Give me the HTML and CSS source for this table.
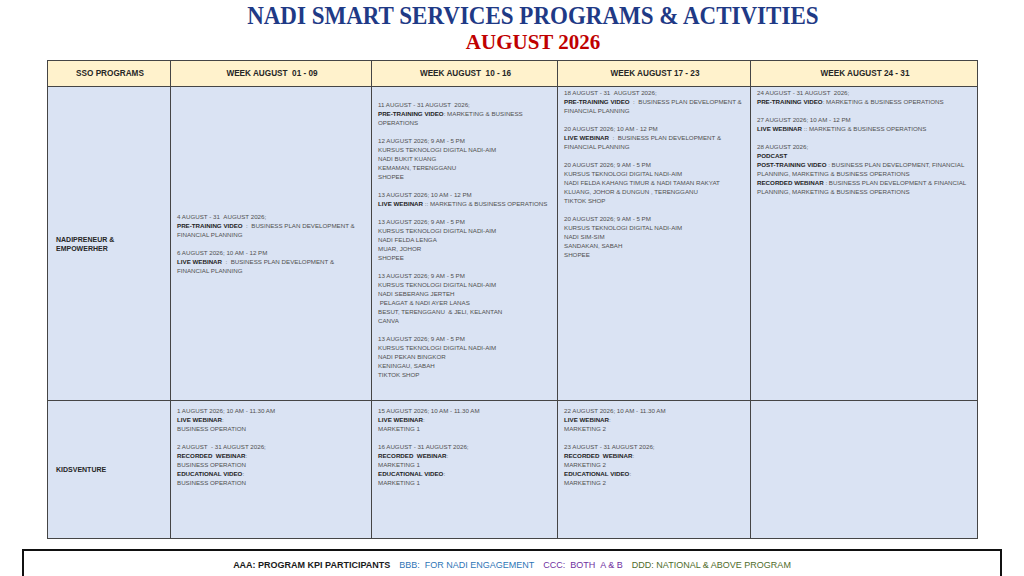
FILE: index.html
```html
<!DOCTYPE html>
<html lang="en">
<head>
<meta charset="utf-8">
<title>NADI Smart Services Programs &amp; Activities</title>
<link rel="stylesheet" href="styles.css">
</head>
<body>
<header class="head">
  <h1 class="title"><span>NADI SMART SERVICES PROGRAMS &amp; ACTIVITIES</span></h1>
  <h2 class="subtitle"><span>AUGUST 2026</span></h2>
</header>

<table class="sched">
  <colgroup>
    <col class="c1"><col class="c2"><col class="c3"><col class="c4"><col class="c5">
  </colgroup>
  <thead>
    <tr class="hrow">
      <th>SSO PROGRAMS</th>
      <th>WEEK AUGUST &nbsp;01 - 09</th>
      <th>WEEK AUGUST &nbsp;10 - 16</th>
      <th>WEEK AUGUST 17 - 23</th>
      <th>WEEK AUGUST 24 - 31</th>
    </tr>
  </thead>
  <tbody>
    <tr class="r1">
      <th class="prog">NADIPRENEUR &amp;<br>EMPOWERHER</th>
      <td class="mid">
        <p>4 AUGUST - 31 &nbsp;AUGUST 2026;<br><b>PRE-TRAINING VIDEO</b> &nbsp;: &nbsp;BUSINESS PLAN DEVELOPMENT &amp;<br>FINANCIAL PLANNING</p>
        <p>6 AUGUST 2026; 10 AM - 12 PM<br><b>LIVE WEBINAR</b> &nbsp;: &nbsp;BUSINESS PLAN DEVELOPMENT &amp;<br>FINANCIAL PLANNING</p>
      </td>
      <td class="tall">
        <p>11 AUGUST - 31 AUGUST &nbsp;2026;<br><b>PRE-TRAINING VIDEO</b>: MARKETING &amp; BUSINESS<br>OPERATIONS</p>
        <p>12 AUGUST 2026; 9 AM - 5 PM<br>KURSUS TEKNOLOGI DIGITAL NADI-AIM<br>NADI BUKIT KUANG<br>KEMAMAN, TERENGGANU<br>SHOPEE</p>
        <p>13 AUGUST 2026; 10 AM - 12 PM<br><b>LIVE WEBINAR</b> :: MARKETING &amp; BUSINESS OPERATIONS</p>
        <p>13 AUGUST 2026; 9 AM - 5 PM<br>KURSUS TEKNOLOGI DIGITAL NADI-AIM<br>NADI FELDA LENGA<br>MUAR, JOHOR<br>SHOPEE</p>
        <p>13 AUGUST 2026; 9 AM - 5 PM<br>KURSUS TEKNOLOGI DIGITAL NADI-AIM<br>NADI SEBERANG JERTEH<br>&nbsp;PELAGAT &amp; NADI AYER LANAS<br>BESUT, TERENGGANU &nbsp;&amp; JELI, KELANTAN<br>CANVA</p>
        <p>13 AUGUST 2026; 9 AM - 5 PM<br>KURSUS TEKNOLOGI DIGITAL NADI-AIM<br>NADI PEKAN BINGKOR<br>KENINGAU, SABAH<br>TIKTOK SHOP</p>
      </td>
      <td class="top">
        <p>18 AUGUST - 31 &nbsp;AUGUST 2026;<br><b>PRE-TRAINING VIDEO</b> &nbsp;: &nbsp;BUSINESS PLAN DEVELOPMENT &amp;<br>FINANCIAL PLANNING</p>
        <p>20 AUGUST 2026; 10 AM - 12 PM<br><b>LIVE WEBINAR</b> &nbsp;: &nbsp;BUSINESS PLAN DEVELOPMENT &amp;<br>FINANCIAL PLANNING</p>
        <p>20 AUGUST 2026; 9 AM - 5 PM<br>KURSUS TEKNOLOGI DIGITAL NADI-AIM<br>NADI FELDA KAHANG TIMUR &amp; NADI TAMAN RAKYAT<br>KLUANG, JOHOR &amp; DUNGUN , TERENGGANU<br>TIKTOK SHOP</p>
        <p>20 AUGUST 2026; 9 AM - 5 PM<br>KURSUS TEKNOLOGI DIGITAL NADI-AIM<br>NADI SIM-SIM<br>SANDAKAN, SABAH<br>SHOPEE</p>
      </td>
      <td class="top">
        <p>24 AUGUST - 31 AUGUST &nbsp;2026;<br><b>PRE-TRAINING VIDEO</b>: MARKETING &amp; BUSINESS OPERATIONS</p>
        <p>27 AUGUST 2026; 10 AM - 12 PM<br><b>LIVE WEBINAR</b> :: MARKETING &amp; BUSINESS OPERATIONS</p>
        <p>28 AUGUST 2026;<br><b>PODCAST</b><br><b>POST-TRAINING VIDEO</b> : BUSINESS PLAN DEVELOPMENT, FINANCIAL<br>PLANNING, MARKETING &amp; BUSINESS OPERATIONS<br><b>RECORDED WEBINAR</b> : BUSINESS PLAN DEVELOPMENT &amp; FINANCIAL<br>PLANNING, MARKETING &amp; BUSINESS OPERATIONS</p>
      </td>
    </tr>
    <tr class="r2">
      <th class="prog">KIDSVENTURE</th>
      <td class="top2">
        <p>1 AUGUST 2026; 10 AM - 11.30 AM<br><b>LIVE WEBINAR</b>:<br>BUSINESS OPERATION</p>
        <p>2 AUGUST &nbsp;- 31 AUGUST 2026;<br><b>RECORDED &nbsp;WEBINAR</b>:<br>BUSINESS OPERATION<br><b>EDUCATIONAL VIDEO</b>:<br>BUSINESS OPERATION</p>
      </td>
      <td class="top2">
        <p>15 AUGUST 2026; 10 AM - 11.30 AM<br><b>LIVE WEBINAR</b>:<br>MARKETING 1</p>
        <p>16 AUGUST - 31 AUGUST 2026;<br><b>RECORDED &nbsp;WEBINAR</b>:<br>MARKETING 1<br><b>EDUCATIONAL VIDEO</b>:<br>MARKETING 1</p>
      </td>
      <td class="top2">
        <p>22 AUGUST 2026; 10 AM - 11.30 AM<br><b>LIVE WEBINAR</b>:<br>MARKETING 2</p>
        <p>23 AUGUST - 31 AUGUST 2026;<br><b>RECORDED &nbsp;WEBINAR</b>:<br>MARKETING 2<br><b>EDUCATIONAL VIDEO</b>:<br>MARKETING 2</p>
      </td>
      <td class="top2"></td>
    </tr>
  </tbody>
</table>

<div class="legend">
  <span class="aaa">AAA: PROGRAM KPI PARTICIPANTS</span>
  <span class="bbb">BBB: &nbsp;FOR NADI ENGAGEMENT</span>
  <span class="ccc">CCC: &nbsp;BOTH &nbsp;A &amp; B</span>
  <span class="ddd">DDD: NATIONAL &amp; ABOVE PROGRAM</span>
</div>
</body>
</html>
```

FILE: styles.css
```css
* { box-sizing: border-box; }

html, body {
  margin: 0;
  padding: 0;
  background: #ffffff;
  width: 1024px;
  height: 576px;
  overflow: hidden;
  font-family: "Liberation Sans", Arial, sans-serif;
}

.head {
  padding-left: 42px;
  text-align: center;
}

.title {
  margin: 3px 0 0 0;
  font-family: "Liberation Serif", "Times New Roman", serif;
  font-weight: bold;
  font-size: 26px;
  line-height: 26px;
  color: #1f3a86;
}

.title span {
  display: inline-block;
  transform: scaleX(0.885);
  white-space: nowrap;
}

.subtitle {
  margin: 2px 0 0 0;
  font-family: "Liberation Serif", "Times New Roman", serif;
  font-weight: bold;
  font-size: 21px;
  line-height: 22px;
  color: #c00000;
}

.sched {
  margin: 7px 0 0 47px;
  width: 930px;
  table-layout: fixed;
  border-collapse: collapse;
  border: 1.5px solid #404040;
}

.c1 { width: 123px; }
.c2 { width: 201px; }
.c3 { width: 186px; }
.c4 { width: 193px; }
.c5 { width: 227px; }

.sched th,
.sched td {
  border: 1.5px solid #454545;
  padding: 0 4px 0 6px;
}

.hrow th {
  height: 26px;
  background: #fff2cc;
  font-size: 8.2px;
  font-weight: bold;
  color: #262626;
  text-align: center;
  vertical-align: middle;
  white-space: nowrap;
}

.r1 { height: 314px; }
.r2 { height: 138px; }

.sched tbody th,
.sched tbody td {
  background: #dae3f3;
}

.sched .prog {
  padding-left: 8px;
  text-align: left;
  font-size: 7px;
  line-height: 9px;
  font-weight: bold;
  color: #262626;
  vertical-align: middle;
}

.sched td {
  font-size: 6.2px;
  line-height: 9px;
  color: #505050;
  white-space: nowrap;
  text-align: left;
}

.sched td p {
  margin: 0 0 9px 0;
}

.sched td p:last-child {
  margin-bottom: 0;
}

.sched td b {
  font-weight: bold;
  color: #1e1e1e;
}

.sched td.mid {
  vertical-align: middle;
}

.sched td.tall {
  vertical-align: top;
  padding-top: 13px;
}

.sched td.top {
  vertical-align: top;
  padding-top: 0.5px;
}

.sched td.top2 {
  vertical-align: top;
  padding-top: 5px;
}

.legend {
  margin: 10px 0 0 22px;
  width: 980px;
  height: 34px;
  border: 2px solid #111111;
  display: flex;
  justify-content: center;
  align-items: center;
  gap: 9px;
  padding-bottom: 2px;
  font-size: 9px;
  white-space: nowrap;
}

.aaa { color: #1a1a1a; font-weight: bold; }
.bbb { color: #2e75b6; }
.ccc { color: #7030a0; }
.ddd { color: #4e6b2a; }
```
